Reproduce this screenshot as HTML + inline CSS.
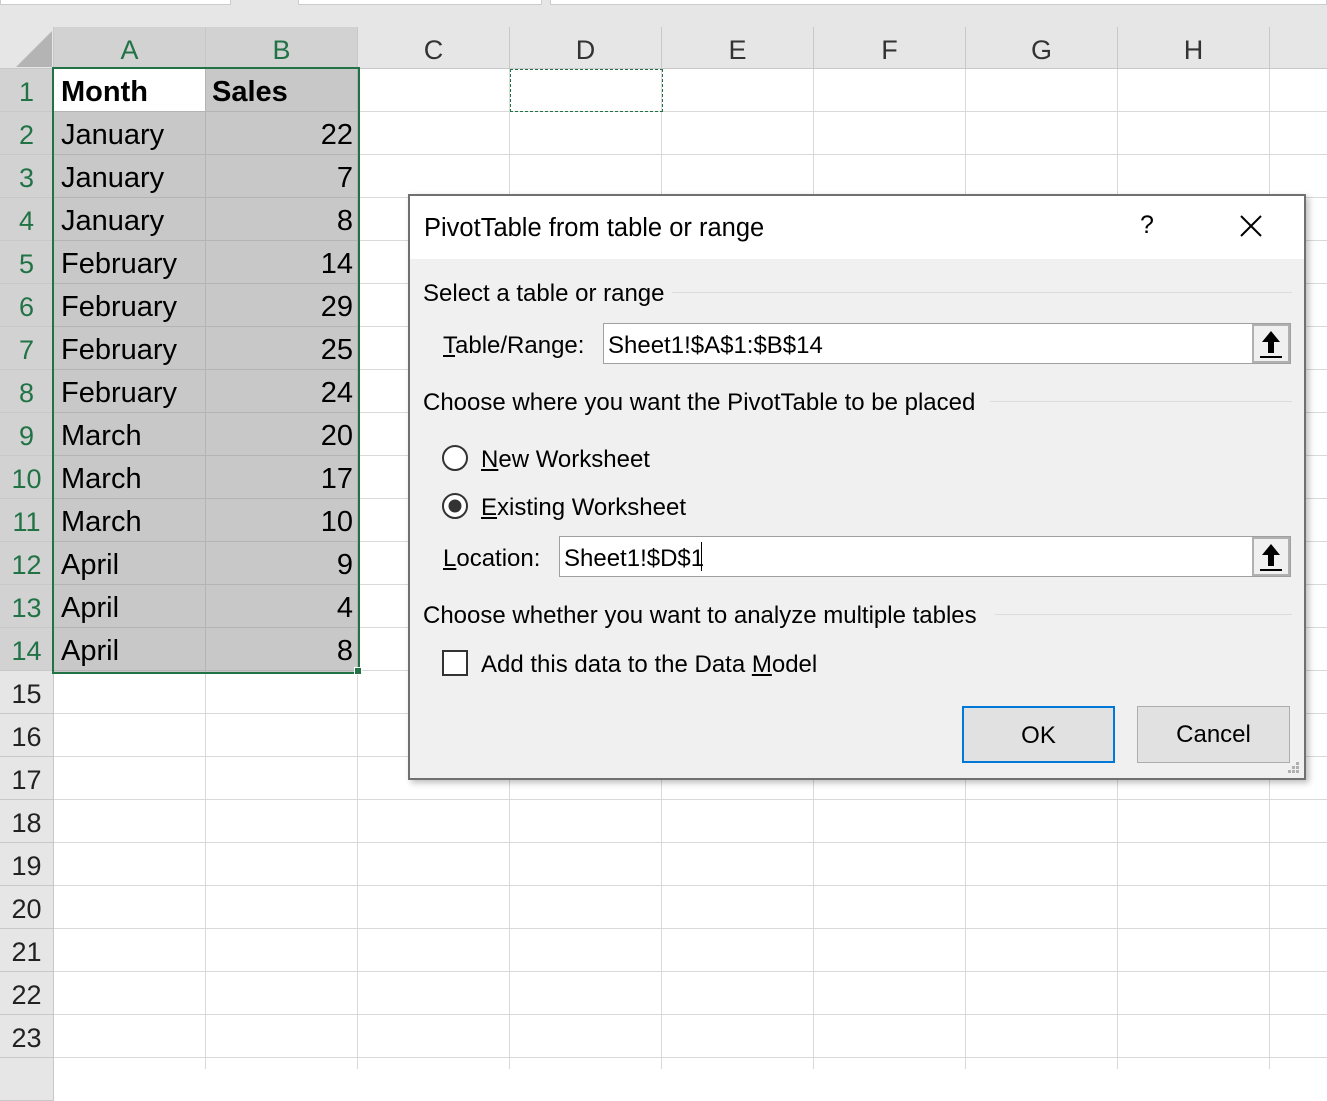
<!DOCTYPE html>
<html><head><meta charset="utf-8"><style>
*{margin:0;padding:0;box-sizing:border-box}
body{width:1327px;height:1069px;overflow:hidden;background:#fff;font-family:"Liberation Sans",sans-serif;position:relative}
.a{position:absolute}
.top{left:0;top:0;width:1327px;height:27px;background:#e6e6e6}
.hdr{top:27px;height:42px;background:#e6e6e6;border-right:1px solid #c8c8c8;border-bottom:1px solid #c8c8c8;font-size:27px;color:#333;text-align:center;line-height:46px}
.rh{left:0;width:54px;height:43px;background:#e6e6e6;border-bottom:1px solid #c8c8c8;border-right:1px solid #c8c8c8;font-size:27px;color:#222;text-align:center;line-height:47px}
.g{color:#217346}
.grid{left:54px;top:69px;width:1273px;height:1000px;background:repeating-linear-gradient(to right,transparent 0 151px,#d9d9d9 151px 152px),repeating-linear-gradient(to bottom,transparent 0 42px,#d9d9d9 42px 43px)}
.sel{left:54px;top:69px;width:304px;height:603px;background-color:#c8c8c8;background-image:repeating-linear-gradient(to right,transparent 0 151px,#b4b4b4 151px 152px),repeating-linear-gradient(to bottom,transparent 0 42px,#b4b4b4 42px 43px)}
.c{font-size:29px;line-height:47px;height:43px;color:#000}
.l{left:61px}
.r{left:206px;width:147px;text-align:right}
.dlg{left:408px;top:194px;width:898px;height:586px;background:#f0f0f0;border:2px solid #707070;box-shadow:3px 3px 6px rgba(0,0,0,.25)}
.t{font-size:24px;color:#000;white-space:nowrap}
.line{height:1px;background:#dcdcdc}
.inp{background:#fff;border:1px solid #a0a0a0;height:41px}
.btn{border:1px solid #adadad;background:#e1e1e1;width:153px;height:57px;font-size:24px;text-align:center;line-height:55px}
.up{width:38px;height:39px;border:2px solid #b0b0b0;background:#f0f0f0}
u{text-decoration:underline}
</style></head><body>
<div class="a top"></div>
<div class="a" style="left:0;top:0;width:231px;height:5px;background:#fff;border:1px solid #ccc;border-top:0"></div>
<div class="a" style="left:298px;top:0;width:244px;height:5px;background:#fff;border:1px solid #ccc;border-top:0"></div>
<div class="a" style="left:550px;top:0;width:777px;height:5px;background:#fff;border:1px solid #ccc;border-top:0"></div>
<div class="a grid"></div>
<div class="a sel"></div>
<div class="a" style="left:54px;top:69px;width:151px;height:42px;background:#fff"></div>
<div class="a" style="left:0;top:27px;width:54px;height:42px;background:#e6e6e6;border-right:1px solid #c8c8c8;border-bottom:1px solid #c8c8c8"></div>
<svg class="a" style="left:16px;top:31px" width="36" height="36"><polygon points="36,0 36,36 0,36" fill="#b4b4b4"/></svg>
<div class="a hdr g" style="left:54px;width:152px;background:#d2d2d2">A</div>
<div class="a hdr g" style="left:206px;width:152px;background:#d2d2d2">B</div>
<div class="a hdr" style="left:358px;width:152px">C</div>
<div class="a hdr" style="left:510px;width:152px">D</div>
<div class="a hdr" style="left:662px;width:152px">E</div>
<div class="a hdr" style="left:814px;width:152px">F</div>
<div class="a hdr" style="left:966px;width:152px">G</div>
<div class="a hdr" style="left:1118px;width:152px">H</div>
<div class="a hdr" style="left:1270px;width:57px;border-right:0"></div>
<div class="a rh g" style="top:69px;background:#d2d2d2">1</div>
<div class="a rh g" style="top:112px;background:#d2d2d2">2</div>
<div class="a rh g" style="top:155px;background:#d2d2d2">3</div>
<div class="a rh g" style="top:198px;background:#d2d2d2">4</div>
<div class="a rh g" style="top:241px;background:#d2d2d2">5</div>
<div class="a rh g" style="top:284px;background:#d2d2d2">6</div>
<div class="a rh g" style="top:327px;background:#d2d2d2">7</div>
<div class="a rh g" style="top:370px;background:#d2d2d2">8</div>
<div class="a rh g" style="top:413px;background:#d2d2d2">9</div>
<div class="a rh g" style="top:456px;background:#d2d2d2">10</div>
<div class="a rh g" style="top:499px;background:#d2d2d2">11</div>
<div class="a rh g" style="top:542px;background:#d2d2d2">12</div>
<div class="a rh g" style="top:585px;background:#d2d2d2">13</div>
<div class="a rh g" style="top:628px;background:#d2d2d2">14</div>
<div class="a rh" style="top:671px">15</div>
<div class="a rh" style="top:714px">16</div>
<div class="a rh" style="top:757px">17</div>
<div class="a rh" style="top:800px">18</div>
<div class="a rh" style="top:843px">19</div>
<div class="a rh" style="top:886px">20</div>
<div class="a rh" style="top:929px">21</div>
<div class="a rh" style="top:972px">22</div>
<div class="a rh" style="top:1015px">23</div>
<div class="a rh" style="top:1058px"></div>

<div class="a c l" style="top:69px;font-weight:bold">Month</div>
<div class="a c" style="left:212px;top:69px;font-weight:bold">Sales</div>
<div class="a c l" style="top:112px">January</div><div class="a c r" style="top:112px">22</div>
<div class="a c l" style="top:155px">January</div><div class="a c r" style="top:155px">7</div>
<div class="a c l" style="top:198px">January</div><div class="a c r" style="top:198px">8</div>
<div class="a c l" style="top:241px">February</div><div class="a c r" style="top:241px">14</div>
<div class="a c l" style="top:284px">February</div><div class="a c r" style="top:284px">29</div>
<div class="a c l" style="top:327px">February</div><div class="a c r" style="top:327px">25</div>
<div class="a c l" style="top:370px">February</div><div class="a c r" style="top:370px">24</div>
<div class="a c l" style="top:413px">March</div><div class="a c r" style="top:413px">20</div>
<div class="a c l" style="top:456px">March</div><div class="a c r" style="top:456px">17</div>
<div class="a c l" style="top:499px">March</div><div class="a c r" style="top:499px">10</div>
<div class="a c l" style="top:542px">April</div><div class="a c r" style="top:542px">9</div>
<div class="a c l" style="top:585px">April</div><div class="a c r" style="top:585px">4</div>
<div class="a c l" style="top:628px">April</div><div class="a c r" style="top:628px">8</div>
<div class="a" style="left:52px;top:67px;width:308px;height:607px;border:2px solid #217346"></div>
<div class="a" style="left:354px;top:667px;width:8px;height:8px;background:#217346;border:1px solid #fff"></div>
<div class="a" style="left:510px;top:69px;width:153px;height:43px;border:1.5px dashed #217346"></div>

<div class="a dlg">
 <div class="a" style="left:0;top:0;width:894px;height:63px;background:#fff"></div>
 <div class="a t" style="left:14px;top:18px;font-size:25.5px">PivotTable from table or range</div>
 <div class="a t" style="left:730px;top:15px;font-size:25px">?</div>
 <svg class="a" style="left:830px;top:19px" width="22" height="22"><path d="M1 1L21 21M21 1L1 21" stroke="#000" stroke-width="2"/></svg>
 <div class="a t" style="left:13px;top:84px">Select a table or range</div>
 <div class="a line" style="left:262px;top:96px;width:620px"></div>
 <div class="a t" style="left:33px;top:136px"><u>T</u>able/Range:</div>
 <div class="a inp" style="left:193px;top:127px;width:688px"></div>
 <div class="a t" style="left:198px;top:136px">Sheet1!$A$1:$B$14</div>
 <div class="a up" style="left:842px;top:128px"><svg width="34" height="35"><path d="M17 5L8 16H14V27H20V16H26Z" fill="#000"/><rect x="6" y="30" width="22" height="2" fill="#000"/></svg></div>
 <div class="a t" style="left:13px;top:193px">Choose where you want the PivotTable to be placed</div>
 <div class="a line" style="left:580px;top:205px;width:302px"></div>
 <svg class="a" style="left:31px;top:248px" width="28" height="28"><circle cx="14" cy="14" r="12" fill="#fff" stroke="#333" stroke-width="2"/></svg>
 <div class="a t" style="left:71px;top:250px"><u>N</u>ew Worksheet</div>
 <svg class="a" style="left:31px;top:296px" width="28" height="28"><circle cx="14" cy="14" r="12" fill="#fff" stroke="#333" stroke-width="2"/><circle cx="14" cy="14" r="6.5" fill="#333"/></svg>
 <div class="a t" style="left:71px;top:298px"><u>E</u>xisting Worksheet</div>
 <div class="a t" style="left:33px;top:349px"><u>L</u>ocation:</div>
 <div class="a inp" style="left:149px;top:340px;width:732px"></div>
 <div class="a t" style="left:154px;top:349px">Sheet1!$D$1</div>
 <div class="a" style="left:291px;top:346px;width:1px;height:29px;background:#000"></div>
 <div class="a up" style="left:842px;top:341px"><svg width="34" height="35"><path d="M17 5L8 16H14V27H20V16H26Z" fill="#000"/><rect x="6" y="30" width="22" height="2" fill="#000"/></svg></div>
 <div class="a t" style="left:13px;top:406px">Choose whether you want to analyze multiple tables</div>
 <div class="a line" style="left:585px;top:418px;width:297px"></div>
 <div class="a" style="left:32px;top:454px;width:26px;height:26px;border:2px solid #333;background:#fff"></div>
 <div class="a t" style="left:71px;top:455px">Add this data to the Data <u>M</u>odel</div>
 <div class="a btn" style="left:552px;top:510px;border:2px solid #0078d7">OK</div>
 <div class="a btn" style="left:727px;top:510px">Cancel</div>
 <svg class="a" style="left:876px;top:564px" width="16" height="16" fill="#b0b0b0"><rect x="10" y="2" width="3" height="3"/><rect x="6" y="6" width="3" height="3"/><rect x="10" y="6" width="3" height="3"/><rect x="2" y="10" width="3" height="3"/><rect x="6" y="10" width="3" height="3"/><rect x="10" y="10" width="3" height="3"/></svg>
</div>
</body></html>
